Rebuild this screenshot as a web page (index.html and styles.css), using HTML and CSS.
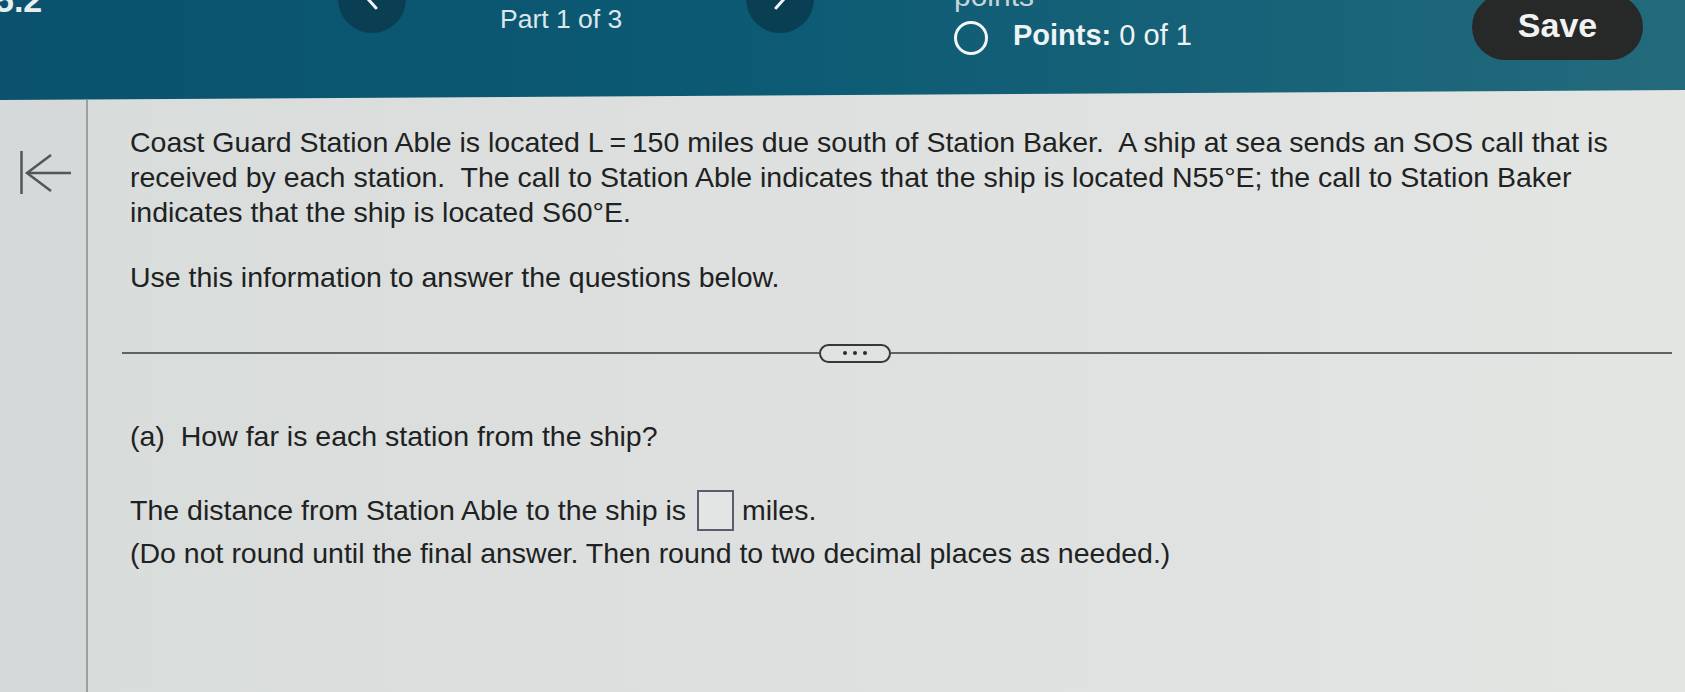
FILE: index.html
```html
<!DOCTYPE html>
<html lang="en">
<head>
<meta charset="utf-8">
<title>Coast Guard Station problem</title>
<link rel="stylesheet" href="styles.css">
</head>
<body>
<header class="topbar">
  <div class="chapter">5.2</div>
  <div class="nav-btn nav-prev">
    <svg width="68" height="68" viewBox="0 0 68 68"><polyline points="38,25 30,34 38,43" fill="none" stroke="#eef3f5" stroke-width="3" stroke-linecap="round" stroke-linejoin="round"/></svg>
  </div>
  <div class="part">Part 1 of 3</div>
  <div class="nav-btn nav-next">
    <svg width="68" height="68" viewBox="0 0 68 68"><polyline points="30,25 38,34 30,43" fill="none" stroke="#eef3f5" stroke-width="3" stroke-linecap="round" stroke-linejoin="round"/></svg>
  </div>
  <div class="points">
    <div class="points-label">points</div>
    <div class="points-row">
      <span class="radio"></span>
      <span class="points-text"><b>Points:</b> 0 of 1</span>
    </div>
  </div>
  <div class="save">Save</div>
</header>
<main class="layout">
  <aside class="sidebar">
    <svg class="collapse-icon" width="56" height="46" viewBox="0 0 56 46">
      <line x1="3.5" y1="1" x2="3.5" y2="44" stroke="#515656" stroke-width="2.5"/>
      <polyline points="33,5 9,23 33,41" fill="none" stroke="#515656" stroke-width="2.5" stroke-linejoin="miter"/>
      <line x1="9" y1="23" x2="53" y2="23" stroke="#515656" stroke-width="2.5"/>
    </svg>
  </aside>
  <section class="content">
    <p class="problem">Coast Guard Station Able is located L&thinsp;=&thinsp;150 miles due south of Station Baker.&nbsp; A ship at sea sends an SOS call that is<br>received by each station.&nbsp; The call to Station Able indicates that the ship is located N55°E; the call to Station Baker<br>indicates that the ship is located S60°E.</p>
    <p class="instruction">Use this information to answer the questions below.</p>
    <div class="divider">
      <span class="rule rule-left"></span>
      <span class="more"><i></i><i></i><i></i></span>
      <span class="rule rule-right"></span>
    </div>
    <p class="question"><span class="q-label">(a)</span> How far is each station from the ship?</p>
    <p class="answer-line">The distance from Station Able to the ship is <span class="answer-box"></span> miles.</p>
    <p class="hint">(Do not round until the final answer. Then round to two decimal places as needed.)</p>
  </section>
</main>
</body>
</html>
```

FILE: styles.css
```css
html, body {
  margin: 0;
  padding: 0;
}
body {
  width: 1685px;
  height: 692px;
  overflow: hidden;
  background: linear-gradient(90deg, #d8dcdb 0%, #dde0df 45%, #e3e5e3 100%);
  font-family: "Liberation Sans", Arial, sans-serif;
  color: #1e2222;
}

/* ---------- top bar ---------- */
.topbar {
  height: 100px;
  display: flex;
  align-items: flex-start;
  overflow: hidden;
  background: linear-gradient(90deg, #0a526d 0%, #0c5a74 45%, #1a6479 80%, #236a7c 100%);
  clip-path: polygon(0 0, 100% 0, 100% 90px, 0 100px);
  color: #e3ecef;
}
.chapter {
  margin-left: -5px;
  width: 65px;
  flex: none;
  margin-top: -17px;
  font-size: 34px;
  line-height: 34px;
  font-weight: bold;
  color: #e9eff1;
}
.nav-btn {
  flex: none;
  width: 68px;
  height: 68px;
  margin-top: -35px;
  border-radius: 50%;
  background: #0a3f53;
}
.nav-btn svg {
  display: block;
}
.nav-prev {
  margin-left: 278px;
}
.part {
  flex: none;
  width: 160px;
  margin-left: 94px;
  margin-top: 6px;
  font-size: 26.5px;
  line-height: 26.5px;
  color: #dde7ea;
}
.nav-next {
  margin-left: 86px;
}
.points {
  flex: none;
  width: 220px;
  margin-left: 140px;
}
.points-label {
  margin-top: -18px;
  font-size: 30px;
  line-height: 28px;
  color: #c6d4d9;
}
.points-row {
  margin-top: 11px;
  display: flex;
  align-items: flex-start;
}
.radio {
  flex: none;
  width: 28px;
  height: 28px;
  border: 3px solid #f2f6f7;
  border-radius: 50%;
}
.points-text {
  margin-left: 25px;
  font-size: 29px;
  line-height: 29px;
  color: #eef3f4;
  white-space: nowrap;
}
.points-text b {
  font-weight: bold;
}
.save {
  flex: none;
  margin-left: auto;
  margin-right: 42px;
  margin-top: -6px;
  width: 171px;
  height: 66px;
  border-radius: 33px;
  background: #272828;
  display: flex;
  align-items: center;
  justify-content: center;
  box-sizing: border-box;
  padding-bottom: 4px;
  font-size: 34px;
  line-height: 34px;
  font-weight: bold;
  color: #f1f2f2;
}

/* ---------- body layout ---------- */
.layout {
  display: flex;
  height: 592px;
}
.sidebar {
  flex: none;
  width: 88px;
  border-right: 2px solid #9aa0a0;
  background: #d5d9d9;
  padding-top: 50px;
  padding-left: 18px;
  box-sizing: border-box;
}
.collapse-icon {
  display: block;
}
.content {
  flex: 1;
  padding-left: 42px;
  padding-right: 13px;
  font-size: 28.5px;
  line-height: 35px;
}
.content p {
  margin: 0;
  white-space: nowrap;
}
.problem {
  margin-top: 25px !important;
}
.instruction {
  margin-top: 30px !important;
}

/* divider with "more" pill */
.divider {
  margin-top: 48px;
  margin-left: -8px;
  height: 20px;
  display: flex;
  align-items: center;
}
.rule {
  height: 2px;
  background: #5e6263;
}
.rule-left {
  width: 697px;
  flex: none;
}
.rule-right {
  flex: 1;
}
.more {
  flex: none;
  width: 72px;
  height: 19px;
  box-sizing: border-box;
  border: 2px solid #343838;
  border-radius: 10px;
  background: #dfe2e1;
  display: flex;
  align-items: center;
  justify-content: center;
  gap: 6px;
}
.more i {
  width: 4px;
  height: 4px;
  border-radius: 50%;
  background: #2a2d2e;
}

.question {
  margin-top: 56px !important;
}
.q-label {
  margin-right: 8px;
}
.answer-line {
  margin-top: 36px !important;
}
.answer-box {
  display: inline-block;
  width: 37px;
  height: 41px;
  box-sizing: border-box;
  border: 2px solid #5c5b70;
  background: #e3e5e4;
  margin-left: 3px;
  vertical-align: -11px;
}
.hint {
  margin-top: 5px !important;
}
```
